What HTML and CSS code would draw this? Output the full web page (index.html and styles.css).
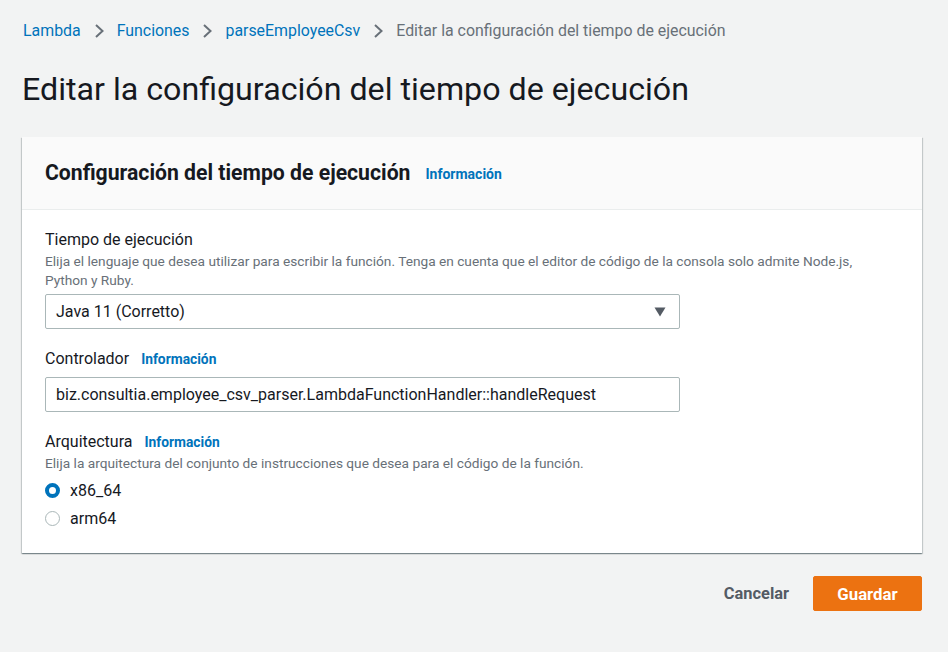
FILE: index.html
```html
<!DOCTYPE html>
<html lang="es">
<head>
<meta charset="utf-8">
<title>Editar la configuración del tiempo de ejecución</title>
<link rel="stylesheet" href="styles.css">
</head>
<body>
<div class="page">
  <nav class="crumbs">
    <a href="#">Lambda</a>
    <svg class="sep" width="12" height="16" viewBox="0 0 12 16"><path d="M3 2 L9.5 8 L3 14" fill="none" stroke="#687078" stroke-width="2"/></svg>
    <a href="#">Funciones</a>
    <svg class="sep" width="12" height="16" viewBox="0 0 12 16"><path d="M3 2 L9.5 8 L3 14" fill="none" stroke="#687078" stroke-width="2"/></svg>
    <a href="#">parseEmployeeCsv</a>
    <svg class="sep" width="12" height="16" viewBox="0 0 12 16"><path d="M3 2 L9.5 8 L3 14" fill="none" stroke="#687078" stroke-width="2"/></svg>
    <span class="current">Editar la configuración del tiempo de ejecución</span>
  </nav>
  <h1 class="title">Editar la configuración del tiempo de ejecución</h1>
  <section class="card">
    <header class="card-head">
      <h2>Configuración del tiempo de ejecución</h2>
      <a class="info" href="#">Información</a>
    </header>
    <div class="card-body">
      <div class="field">
        <div class="label">Tiempo de ejecución</div>
        <div class="desc">Elija el lenguaje que desea utilizar para escribir la función. Tenga en cuenta que el editor de código de la consola solo admite Node.js, Python y Ruby.</div>
        <div class="control select">
          <span>Java 11 (Corretto)</span>
          <svg width="12" height="10" viewBox="0 0 12 10"><path d="M0.5 0.5 H11.5 L6 9.5 Z" fill="#545b64"/></svg>
        </div>
      </div>
      <div class="field">
        <div class="label">Controlador <a class="info" href="#">Información</a></div>
        <div class="control input">biz.consultia.employee_csv_parser.LambdaFunctionHandler::handleRequest</div>
      </div>
      <div class="field">
        <div class="label">Arquitectura <a class="info" href="#">Información</a></div>
        <div class="desc">Elija la arquitectura del conjunto de instrucciones que desea para el código de la función.</div>
        <div class="radios">
          <div class="radio"><span class="dot on"></span>x86_64</div>
          <div class="radio"><span class="dot"></span>arm64</div>
        </div>
      </div>
    </div>
  </section>
  <div class="actions">
    <button class="btn-link">Cancelar</button>
    <button class="btn-primary">Guardar</button>
  </div>
</div>
</body>
</html>
```

FILE: styles.css
```css
* { box-sizing: border-box; }
html, body { margin: 0; padding: 0; }
body {
  background: #f2f3f3;
  font-family: Roboto, "Open Sans", Arial, sans-serif;
  color: #16191f;
  width: 948px;
  height: 652px;
  overflow: hidden;
}
.page { padding: 20px 26px 0 22px; }
.crumbs {
  display: flex;
  align-items: center;
  gap: 12px;
  font-size: 15.9px;
  line-height: 22px;
  padding-left: 1px;
}
.crumbs a { color: #0073bb; text-decoration: none; }
.crumbs .current { color: #687078; }
.crumbs .sep { display: block; }
.title {
  margin: 27px 0 0;
  font-size: 32.2px;
  font-weight: 400;
  line-height: 40px;
  color: #16191f;
}
.card {
  margin-top: 28px;
  background: #fff;
  box-shadow: 0 1px 1px 0 rgba(0,28,36,.3), 1px 1px 1px 0 rgba(0,28,36,.15), -1px 1px 1px 0 rgba(0,28,36,.15);
}
.card-head {
  background: #fafafa;
  border-bottom: 1px solid #eaeded;
  height: 73px;
  display: flex;
  align-items: center;
  gap: 15px;
  padding: 0 23px;
}
.card-head h2 {
  margin: 0;
  font-size: 21.2px;
  font-weight: 700;
  line-height: 26px;
}
.info {
  color: #0073bb;
  text-decoration: none;
  font-size: 13.8px;
  font-weight: 700;
}
.card-head .info { font-size: 14px; margin-top: 1px; }
.card-body { padding: 19px 23px 21px; }
.field { margin-bottom: 19px; }
.field:last-child { margin-bottom: 0; }
.label {
  font-size: 16px;
  line-height: 22px;
}
.label .info { margin-left: 8px; }
.desc {
  font-size: 13.7px;
  line-height: 19px;
  color: #687078;
  margin-top: 1px;
  max-width: 830px;
}
.control {
  margin-top: 4px;
  width: 635px;
  height: 35px;
  border: 1px solid #aab7b8;
  border-radius: 2px;
  background: #fff;
  display: flex;
  align-items: center;
  padding: 0 13px 0 10px;
  font-size: 16px;
  color: #16191f;
}
.select { justify-content: space-between; }
.input { margin-top: 7px; }
.radios { margin-top: 3px; display: flex; flex-direction: column; }
.radio { display: flex; align-items: center; gap: 10px; font-size: 16px; height: 28px; }
.dot {
  width: 15px; height: 15px;
  border-radius: 50%;
  border: 1px solid #aab7b8;
  background: #fff;
}
.dot.on { border: 4.5px solid #0073bb; }
.actions {
  display: flex;
  justify-content: flex-end;
  align-items: center;
  gap: 24px;
  margin-top: 23px;
}
.btn-link {
  background: none; border: 0;
  font-family: inherit;
  font-size: 16.4px; font-weight: 700;
  color: #545b64;
  padding: 0;
}
.btn-primary {
  font-family: inherit;
  background: #ec7211;
  border: 1px solid #ec7211;
  border-radius: 2px;
  color: #fff;
  font-size: 16.8px;
  font-weight: 700;
  width: 109px;
  height: 35px;
}
```
